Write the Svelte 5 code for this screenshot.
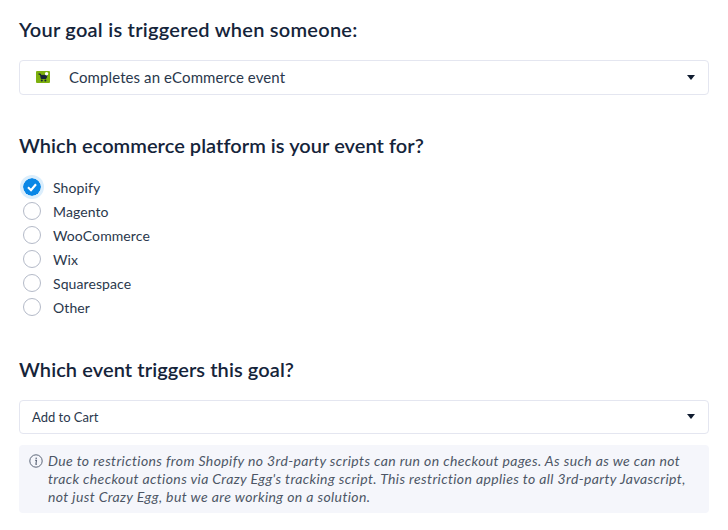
<script>
const platforms = ['Shopify', 'Magento', 'WooCommerce', 'Wix', 'Squarespace', 'Other'];
let platform = $state('Shopify');
</script>

<div class="page">
	<h2 class="first">Your goal is triggered when someone:</h2>
	<div class="select with-icon">
		<svg class="cart" width="14" height="12" viewBox="0 0 14 12">
			<rect width="14" height="12" rx="1" fill="#7db00e" />
			<path d="M2.5 3H4.5L5.2 7.5H10L11 4.4H4.8" fill="#16233a" stroke="#16233a" stroke-width="1" />
			<circle cx="5.8" cy="9.4" r="1" fill="#16233a" />
			<circle cx="9.4" cy="9.4" r="1" fill="#16233a" />
			<circle cx="10.6" cy="2.8" r="1.7" fill="#fff" />
		</svg>
		<span>Completes an eCommerce event</span>
		<i class="caret"></i>
	</div>

	<h2 class="second">Which ecommerce platform is your event for?</h2>
	<div class="radios">
		{#each platforms as name}
			<label class="radio">
				<input type="radio" bind:group={platform} value={name} />
				{#if platform === name}
					<svg class="dot checked" width="18" height="18" viewBox="0 0 18 18">
						<circle cx="9" cy="9" r="9" fill="#0a87e6" />
						<path d="M5 9.3L8 12.2L13 6.3" fill="none" stroke="#fff" stroke-width="2.2" />
					</svg>
				{:else}
					<span class="dot"></span>
				{/if}
				<span>{name}</span>
			</label>
		{/each}
	</div>

	<h2 class="third">Which event triggers this goal?</h2>
	<div class="select short">
		<span>Add to Cart</span>
		<i class="caret"></i>
	</div>

	<div class="note">
		<svg class="info" width="14" height="14" viewBox="0 0 14 14">
			<circle cx="7" cy="7" r="6.2" fill="none" stroke="#5c6678" stroke-width="1" />
			<circle cx="7.2" cy="4.2" r="0.8" fill="#5c6678" />
			<path d="M6 6.3H7.5L6.9 10.2H8" fill="none" stroke="#5c6678" stroke-width="1.1" />
		</svg>
		<p>Due to restrictions from Shopify no 3rd-party scripts can run on checkout pages. As such as we can not track checkout actions via Crazy Egg's tracking script. This restriction applies to all 3rd-party Javascript, not just Crazy Egg, but we are working on a solution.</p>
	</div>
</div>

<style>
:global(body) {
	background: #fff;
}

.page {
	padding: 17px 19px 0 19px;
	font-family: Lato, "Open Sans", sans-serif;
	color: #1a2a3e;
}

h2 {
	margin: 0;
	font-size: 20px;
	line-height: 24px;
	font-weight: 600;
	color: #15243a;
	letter-spacing: 0.05px;
}

.first {
	letter-spacing: 0.25px;
}

.second {
	margin-top: 38px;
}

.third {
	margin-top: 38px;
	letter-spacing: 0.09px;
}

.select {
	display: flex;
	align-items: center;
	height: 35px;
	box-sizing: border-box;
	margin-top: 19px;
	padding: 0 13px 1px 12px;
	border: 1px solid #e4e6f0;
	border-radius: 4px;
	font-size: 13px;
	color: #2a384c;
}

.with-icon span {
	margin-left: 19px;
	font-size: 15px;
	letter-spacing: 0.1px;
}

.cart {
	margin-left: 4px;
}

.short {
	height: 34px;
}

.caret {
	margin-left: auto;
	width: 0;
	height: 0;
	border-left: 4px solid transparent;
	border-right: 4px solid transparent;
	border-top: 5px solid #101c30;
}

.radios {
	margin-top: 18px;
}

.radio {
	display: flex;
	align-items: center;
	gap: 12px;
	height: 24px;
	font-size: 14px;
	letter-spacing: 0.1px;
	color: #2a384c;
}

.radio input {
	display: none;
}

.dot {
	display: block;
	box-sizing: border-box;
	flex: none;
	margin-left: 4px;
	width: 18px;
	height: 18px;
	border: 1.5px solid #b4bac8;
	border-radius: 50%;
}

.checked {
	border: 0;
	box-shadow: 0 0 0 3px #dbeefc;
}

.note {
	display: flex;
	gap: 5px;
	margin-top: 11px;
	padding: 7px 20px 7px 10px;
	background: #f5f6fb;
	border-radius: 4px;
}

.info {
	flex: none;
	margin-top: 2px;
}

.note p {
	margin: 0;
	font-size: 14px;
	line-height: 18px;
	font-style: italic;
	color: #4d5666;
	letter-spacing: 0.38px;
}
</style>
